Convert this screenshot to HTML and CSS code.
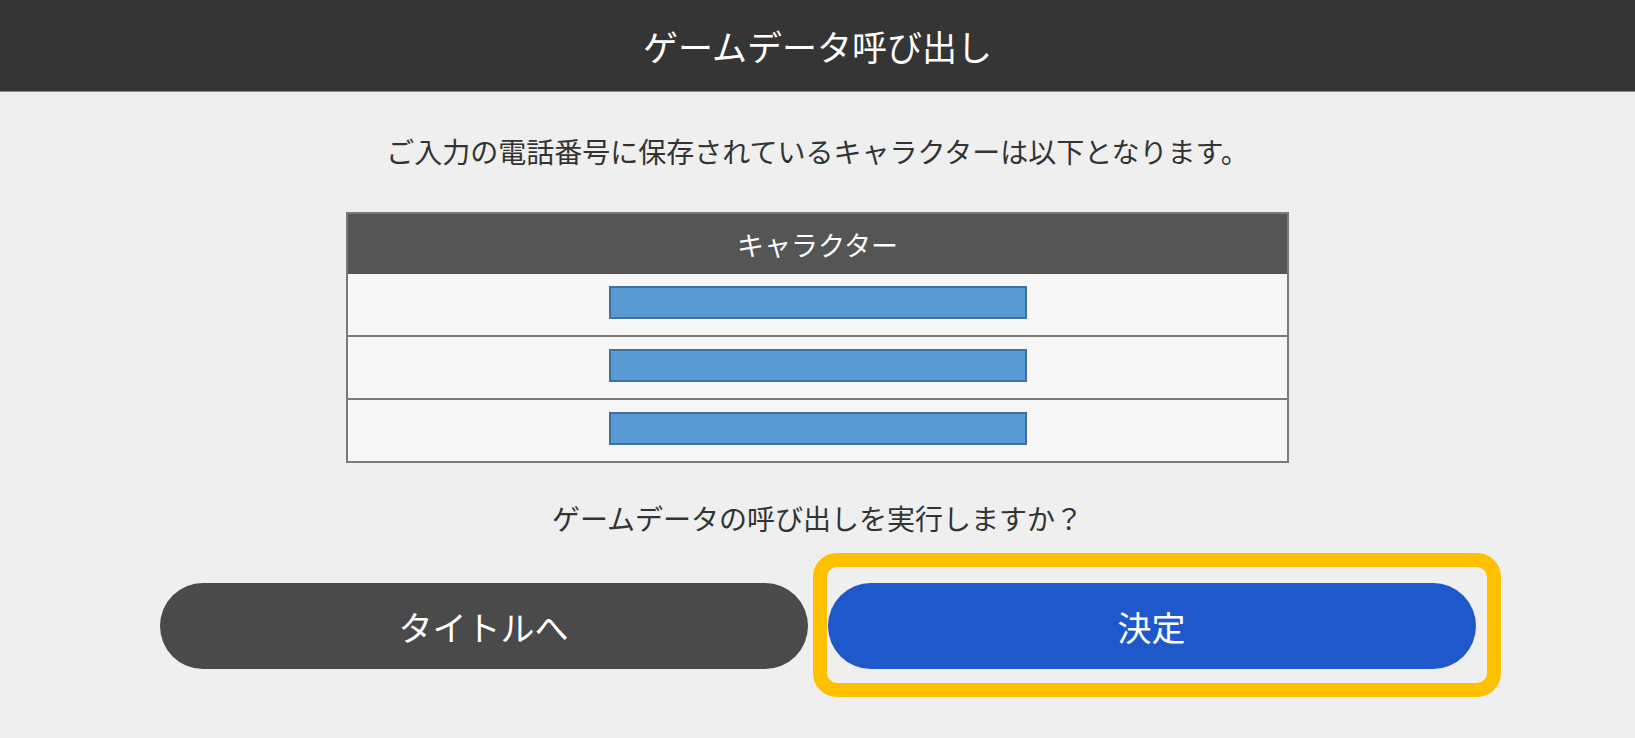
FILE: index.html
```html
<!DOCTYPE html>
<html lang="ja">
<head>
    <meta charset="UTF-8">
    <meta name="viewport" content="width=device-width, initial-scale=1.0">
    <title>ゲームデータ呼び出し</title>
    <link rel="stylesheet" href="styles.css">
</head>
<body>
    <header class="top-bar">ゲームデータ呼び出し</header>

    <main class="content">
        <p class="message">ご入力の電話番号に保存されているキャラクターは以下となります。</p>

        <div class="chara-table">
            <div class="chara-head">キャラクター</div>
            <div class="chara-row"><span class="mask"></span></div>
            <div class="chara-row"><span class="mask"></span></div>
            <div class="chara-row"><span class="mask"></span></div>
        </div>

        <p class="message confirm">ゲームデータの呼び出しを実行しますか？</p>

        <div class="buttons">
            <button class="btn btn-back">タイトルへ</button>
            <div class="btn-wrap">
                <button class="btn btn-ok">決定</button>
                <span class="highlight"></span> <!-- 注目枠 -->
            </div>
        </div>
    </main>
</body>
</html>
```
FILE: styles.css
```css
body {
    margin: 0;
    background-color: #efefef;
    font-family: "Noto Sans CJK JP", "Noto Sans", sans-serif;
    color: #333;
}
.top-bar {
    height: 91px;
    background-color: #353535;
    border-bottom: 1px solid #8a8a8a;
    color: #fff;
    font-size: 35px;
    display: flex;
    align-items: center;
    justify-content: center;
}
.content {
    display: flex;
    flex-direction: column;
    align-items: center;
    padding-bottom: 60px; /* 注目枠が切れないように */
}
.message {
    margin: 39px 0 0;
    font-size: 28px;
    line-height: 40px;
}
.chara-table {
    margin-top: 41px;
    width: 939px;
    border: 2px solid #7a7a7a;
    background-color: #f7f7f7;
}
.chara-head {
    height: 60px;
    background-color: #555;
    color: #fff;
    font-size: 27px;
    display: flex;
    align-items: center;
    justify-content: center;
}
.chara-row {
    height: 61px;
    box-sizing: border-box;
    padding-top: 12px;
    display: flex;
    justify-content: center;
    align-items: flex-start;
}
.chara-row + .chara-row {
    height: 63px;
    border-top: 2px solid #7a7a7a;
}
.mask {
    width: 414px;
    height: 29px;
    background-color: #5b9bd5;
    border: 2px solid #41719c;
}
.confirm {
    margin-top: 35px;
}
.buttons {
    margin-top: 45px;
    display: flex;
    gap: 20px;
}
.btn {
    width: 648px;
    height: 86px;
    border: none;
    border-radius: 43px;
    color: #fff;
    font-family: inherit;
    font-size: 34px;
    padding: 0;
}
.btn-back {
    background-color: #4a4a4a;
}
.btn-ok {
    background-color: #1f58cb;
}
.btn-wrap {
    position: relative;
}
.highlight {
    position: absolute;
    left: -15px;
    top: -30px;
    right: -25px;
    bottom: -28px;
    border: 14px solid #ffc000;
    border-radius: 24px;
}
```
